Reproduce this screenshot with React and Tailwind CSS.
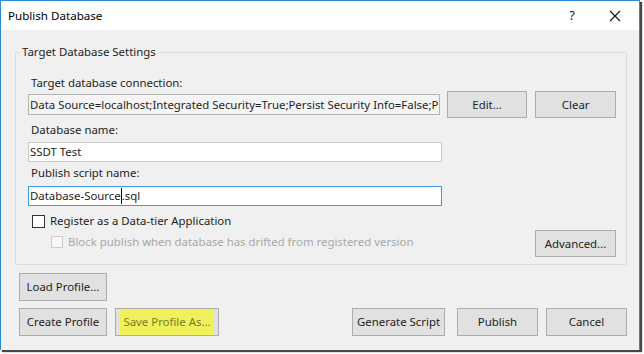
export default function App() {
  const font = { fontFamily: '"Noto Sans", "Open Sans", sans-serif' };
  const btn =
    "flex items-center justify-center whitespace-nowrap bg-[#e1e1e1] border border-[#adadad] text-[#1e1e1e] text-[11.4px] leading-none";
  const txt = "text-[11.4px] leading-[16px] text-[#1e1e1e]";
  return (
    <div className="w-[644px] h-[354px] bg-white overflow-hidden" style={font}>
      <div className="w-[640px] h-[350px] border border-[#2a8ad8] border-b-0 bg-[#f0f0f0] shadow-[2px_2px_1px_rgba(40,40,40,0.85)] flex flex-col">
        {/* Title bar */}
        <div className="h-[29px] bg-white flex items-center pl-[7px] pr-[16px] shrink-0">
          <span className="text-[11.6px] text-black flex-1">Publish Database</span>
          <span className="text-[13px] text-[#222] mr-[34px]">?</span>
          <svg width="12" height="12" viewBox="0 0 12 12" className="mr-[2px]">
            <path d="M1 1 L11 11 M11 1 L1 11" stroke="#111" strokeWidth="1.1" fill="none" />
          </svg>
        </div>

        {/* Body */}
        <div className="flex-1 flex flex-col pl-[14px] pr-[12px]">
          {/* Group box */}
          <div className="relative mt-[22px] h-[213px] border border-[#dcdcdc] rounded-[2px]">
            <span className={`absolute -top-[9px] left-[4px] px-[2px] bg-[#f0f0f0] ${txt}`}>
              Target Database Settings
            </span>
            <div className="flex flex-col pl-[12px] pr-[10px] pt-[22px]">
              <div className={`${txt} pl-[3px]`}>Target database connection:</div>
              <div className="flex items-center mt-[0px] h-[27px]">
                <div className="w-[414px] h-[21px] border border-[#b4b4b4] bg-[#f4f4f4] overflow-hidden whitespace-nowrap text-[11.4px] leading-[19px] pl-[1px] text-[#1e1e1e]">
                  Data Source=localhost;Integrated Security=True;Persist Security Info=False;Pooling=False
                </div>
                <div className={`${btn} w-[81px] h-[27px] ml-[7px]`}>Edit...</div>
                <div className={`${btn} w-[81px] h-[27px] ml-[8px]`}>Clear</div>
              </div>
              <div className={`${txt} pl-[3px] mt-[4px]`}>Database name:</div>
              <div className="w-[414px] h-[20px] border border-[#c8c8c8] bg-white text-[11.4px] leading-[18px] pl-[1px] text-[#1e1e1e] mt-[4px]">
                SSDT Test
              </div>
              <div className={`${txt} pl-[3px] mt-[3px]`}>Publish script name:</div>
              <div className="w-[414px] h-[20px] border border-[#3c9ae6] bg-white text-[11.4px] leading-[18px] pl-[1px] text-[#1e1e1e] mt-[5px] flex">
                <span>Database-Source</span>
                <span className="w-[1px] h-[16px] bg-black mt-[1px]"></span>
                <span>.sql</span>
              </div>
              <div className="flex items-center mt-[7px] pl-[4px]">
                <div className="w-[13px] h-[13px] border border-[#333] bg-white"></div>
                <span className={`ml-[5px] ${txt}`}>Register as a Data-tier Application</span>
              </div>
              <div className="flex items-center justify-between mt-[1px]">
                <div className="flex items-center pl-[23px] -mt-[3px]">
                  <div className="w-[12px] h-[12px] border border-[#cccccc] bg-[#f7f7f7]"></div>
                  <span className="ml-[5px] text-[11.4px] leading-[16px] text-[#a8a8a8]">
                    Block publish when database has drifted from registered version
                  </span>
                </div>
                <div className={`${btn} w-[81px] h-[27px]`}>Advanced...</div>
              </div>
            </div>
          </div>

          {/* Bottom buttons */}
          <div className="flex mt-[8px] pl-[4px]">
            <div className={`${btn} w-[88px] h-[28px]`}>Load Profile...</div>
          </div>
          <div className="flex items-center mt-[7px] pl-[4px]">
            <div className={`${btn} w-[88px] h-[28px]`}>Create Profile</div>
            <div className={`${btn} w-[104px] h-[28px] ml-[8px]`}>
              <span className="bg-[#f0f05a] text-[#7a7a28] px-[3px] py-[5px] leading-[16px]">Save Profile As...</span>
            </div>
            <div className="flex-1"></div>
            <div className={`${btn} w-[93px] h-[28px]`}>Generate Script</div>
            <div className={`${btn} w-[81px] h-[28px] ml-[12px]`}>Publish</div>
            <div className={`${btn} w-[81px] h-[28px] ml-[8px]`}>Cancel</div>
          </div>
        </div>
      </div>
    </div>
  );
}
